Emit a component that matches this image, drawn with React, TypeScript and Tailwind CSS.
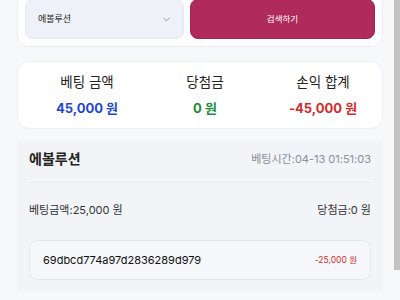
import React from "react";

export default function App() {
  const font = { fontFamily: '"Inter", "Noto Sans CJK KR", sans-serif' };
  return (
    <div className="relative w-[400px] h-[300px] overflow-hidden bg-[#f7f8fa]" style={font}>
      <div className="px-[17px]">
        <div className="-mt-[9px] bg-white rounded-[12px] border border-[#eceef2] p-[7px] flex gap-[6px]">
          <div className="w-[159px] h-[40px] rounded-[8px] bg-[#eef1f7] border border-[#e3e7ef] flex items-center justify-between pl-[12px] pr-[11px]">
            <span className="text-[9px] text-[#222]">에볼루션</span>
            <svg width="11" height="11" viewBox="0 0 24 24" fill="none" stroke="#8a8f99" strokeWidth="2" strokeLinecap="round" strokeLinejoin="round">
              <path d="M6 9l6 6 6-6" />
            </svg>
          </div>
          <div className="flex-1 h-[40px] rounded-[8px] bg-[#b02b5b] border border-[#9e2450] flex items-center justify-center">
            <span className="text-[8.5px] text-white">검색하기</span>
          </div>
        </div>

        <div className="mt-[14px] bg-white rounded-[12px] border border-[#eceef2] h-[68px] pl-[10px] grid grid-cols-3 items-center">
          <div className="flex flex-col items-center gap-[6px]">
            <span className="text-[13.5px] leading-[20px] text-[#222]">베팅 금액</span>
            <span className="text-[13px] leading-[20px] font-bold text-[#1e47d0]">45,000 원</span>
          </div>
          <div className="flex flex-col items-center gap-[6px]">
            <span className="text-[13.5px] leading-[20px] text-[#222]">당첨금</span>
            <span className="text-[13px] leading-[20px] font-bold text-[#1c8a3a]">0 원</span>
          </div>
          <div className="flex flex-col items-center gap-[6px]">
            <span className="text-[13.5px] leading-[20px] text-[#222]">손익 합계</span>
            <span className="text-[13px] leading-[20px] font-bold text-[#d42b2b]">-45,000 원</span>
          </div>
        </div>

        <div className="mt-[11px] bg-[#f2f4f8] rounded-[4px] px-[12px] pb-[12px]">
          <div className="flex items-center justify-between pt-[9px] pb-[13px] border-b border-[#e6e9ef]">
            <span className="text-[14px] leading-[20px] font-semibold text-[#222]">에볼루션</span>
            <span className="text-[11px] leading-[20px] text-[#8b8f97]">베팅시간:04-13 01:51:03</span>
          </div>
          <div className="flex items-center justify-between mt-[19px] text-[11px] leading-[16px] text-[#333]">
            <span>베팅금액:25,000 원</span>
            <span>당첨금:0 원</span>
          </div>
          <div className="mt-[22px] h-[40px] rounded-[8px] bg-[#f5f7fa] border border-[#e4e7ec] flex items-center justify-between px-[13px]">
            <span className="text-[11px] text-[#111]">69dbcd774a97d2836289d979</span>
            <span className="text-[8.5px] text-[#d42b2b]">-25,000 원</span>
          </div>
        </div>
      </div>
      <div className="absolute right-0 top-0 w-[6px] h-[270px] bg-[#c2c2c2]" />
    </div>
  );
}
